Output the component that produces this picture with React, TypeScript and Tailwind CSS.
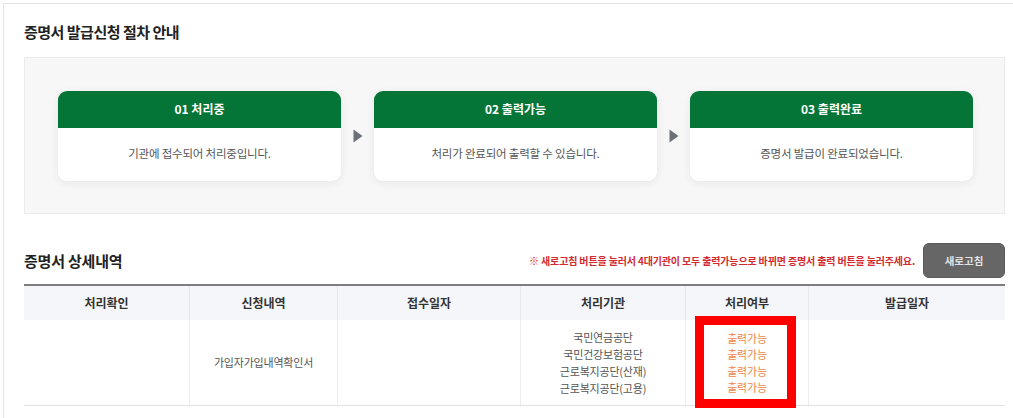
import React from "react";

const steps = [
  { title: "01 처리중", desc: "기관에 접수되어 처리중입니다." },
  { title: "02 출력가능", desc: "처리가 완료되어 출력할 수 있습니다." },
  { title: "03 출력완료", desc: "증명서 발급이 완료되었습니다." },
];

const headers = ["처리확인", "신청내역", "접수일자", "처리기관", "처리여부", "발급일자"];
const orgs = ["국민연금공단", "국민건강보험공단", "근로복지공단(산재)", "근로복지공단(고용)"];

function Arrow() {
  return (
    <div className="w-[33px] flex justify-center">
      <svg width="10" height="14" viewBox="0 0 10 14">
        <path d="M0.5 0.5 L9.5 7 L0.5 13.5 Z" fill="#6b7079" />
      </svg>
    </div>
  );
}

export default function App() {
  return (
    <div className="relative w-[1013px] h-[418px] overflow-hidden bg-white font-['Noto_Sans_CJK_KR','Noto_Sans',sans-serif]">
      <div className="ml-[3px] mt-[3px] h-[500px] border-l border-t border-[#e4e4e4] pl-[20px] pt-[18px]">
        <h2 className="text-[15px] font-bold leading-[20px] tracking-[-0.5px] text-[#222]">
          증명서 발급신청 절차 안내
        </h2>
        <div className="mt-[15px] flex h-[157px] w-[981px] items-center border border-[#ebebeb] bg-[#f7f7f7] pl-[33px]">
          {steps.map((s, i) => (
            <React.Fragment key={s.title}>
              {i > 0 && <Arrow />}
              <div className="h-[90px] w-[283px] overflow-hidden rounded-[9px] bg-white shadow-[0_2px_10px_rgba(0,0,0,0.07)]">
                <div className="flex h-[37px] items-center justify-center bg-[#047537] text-[12px] font-bold text-white">
                  {s.title}
                </div>
                <div className="flex h-[53px] items-center justify-center text-[11.5px] tracking-[-0.2px] text-[#555]">
                  {s.desc}
                </div>
              </div>
            </React.Fragment>
          ))}
        </div>

        <div className="mt-[29px] flex h-[35px] w-[981px] items-center">
          <h2 className="text-[15px] font-bold leading-[20px] tracking-[-0.2px] text-[#222]">증명서 상세내역</h2>
          <div className="ml-auto mr-[8px] text-[10px] font-bold tracking-[-0.15px] text-[#d42a2f]">
            ※ 새로고침 버튼을 눌러서 4대기관이 모두 출력가능으로 바뀌면 증명서 출력 버튼을 눌러주세요.
          </div>
          <button className="flex h-[35px] w-[82px] items-center justify-center rounded-[6px] border border-[#5a5a5a] bg-[#666] text-[10.5px] font-bold text-[#e2e2e2]">
            새로고침
          </button>
        </div>

        <div className="mt-[6px] w-[981px] border-t-2 border-[#7d7d7d]">
          <div className="grid h-[34px] grid-cols-[165px_148px_183px_165px_123px_197px] bg-[#f4f6f9]">
            {headers.map((h, i) => (
              <div
                key={h}
                className={`flex items-center justify-center text-[12px] font-bold text-[#333] ${i > 0 ? "border-l border-[#e6e8ec]" : ""}`}
              >
                {h}
              </div>
            ))}
          </div>
          <div className="grid h-[86px] grid-cols-[165px_148px_183px_165px_123px_197px] border-b border-[#e2e2e2] text-[11px] tracking-[-0.2px] text-[#555]">
            <div />
            <div className="flex items-center justify-center border-l border-[#eeeeee]">가입자가입내역확인서</div>
            <div className="border-l border-[#eeeeee]" />
            <div className="flex flex-col items-center justify-center border-l border-[#eeeeee] leading-[17px]">
              {orgs.map((o) => (
                <div key={o}>{o}</div>
              ))}
            </div>
            <div className="flex flex-col items-center justify-center border-l border-[#eeeeee] leading-[16.5px] text-[#f0874a]">
              {orgs.map((o) => (
                <div key={o}>출력가능</div>
              ))}
            </div>
            <div className="border-l border-[#eeeeee]" />
          </div>
        </div>
      </div>

      <div className="absolute left-[695px] top-[316px] h-[92px] w-[101px] border-[9px] border-[#ff0000]" />
    </div>
  );
}
